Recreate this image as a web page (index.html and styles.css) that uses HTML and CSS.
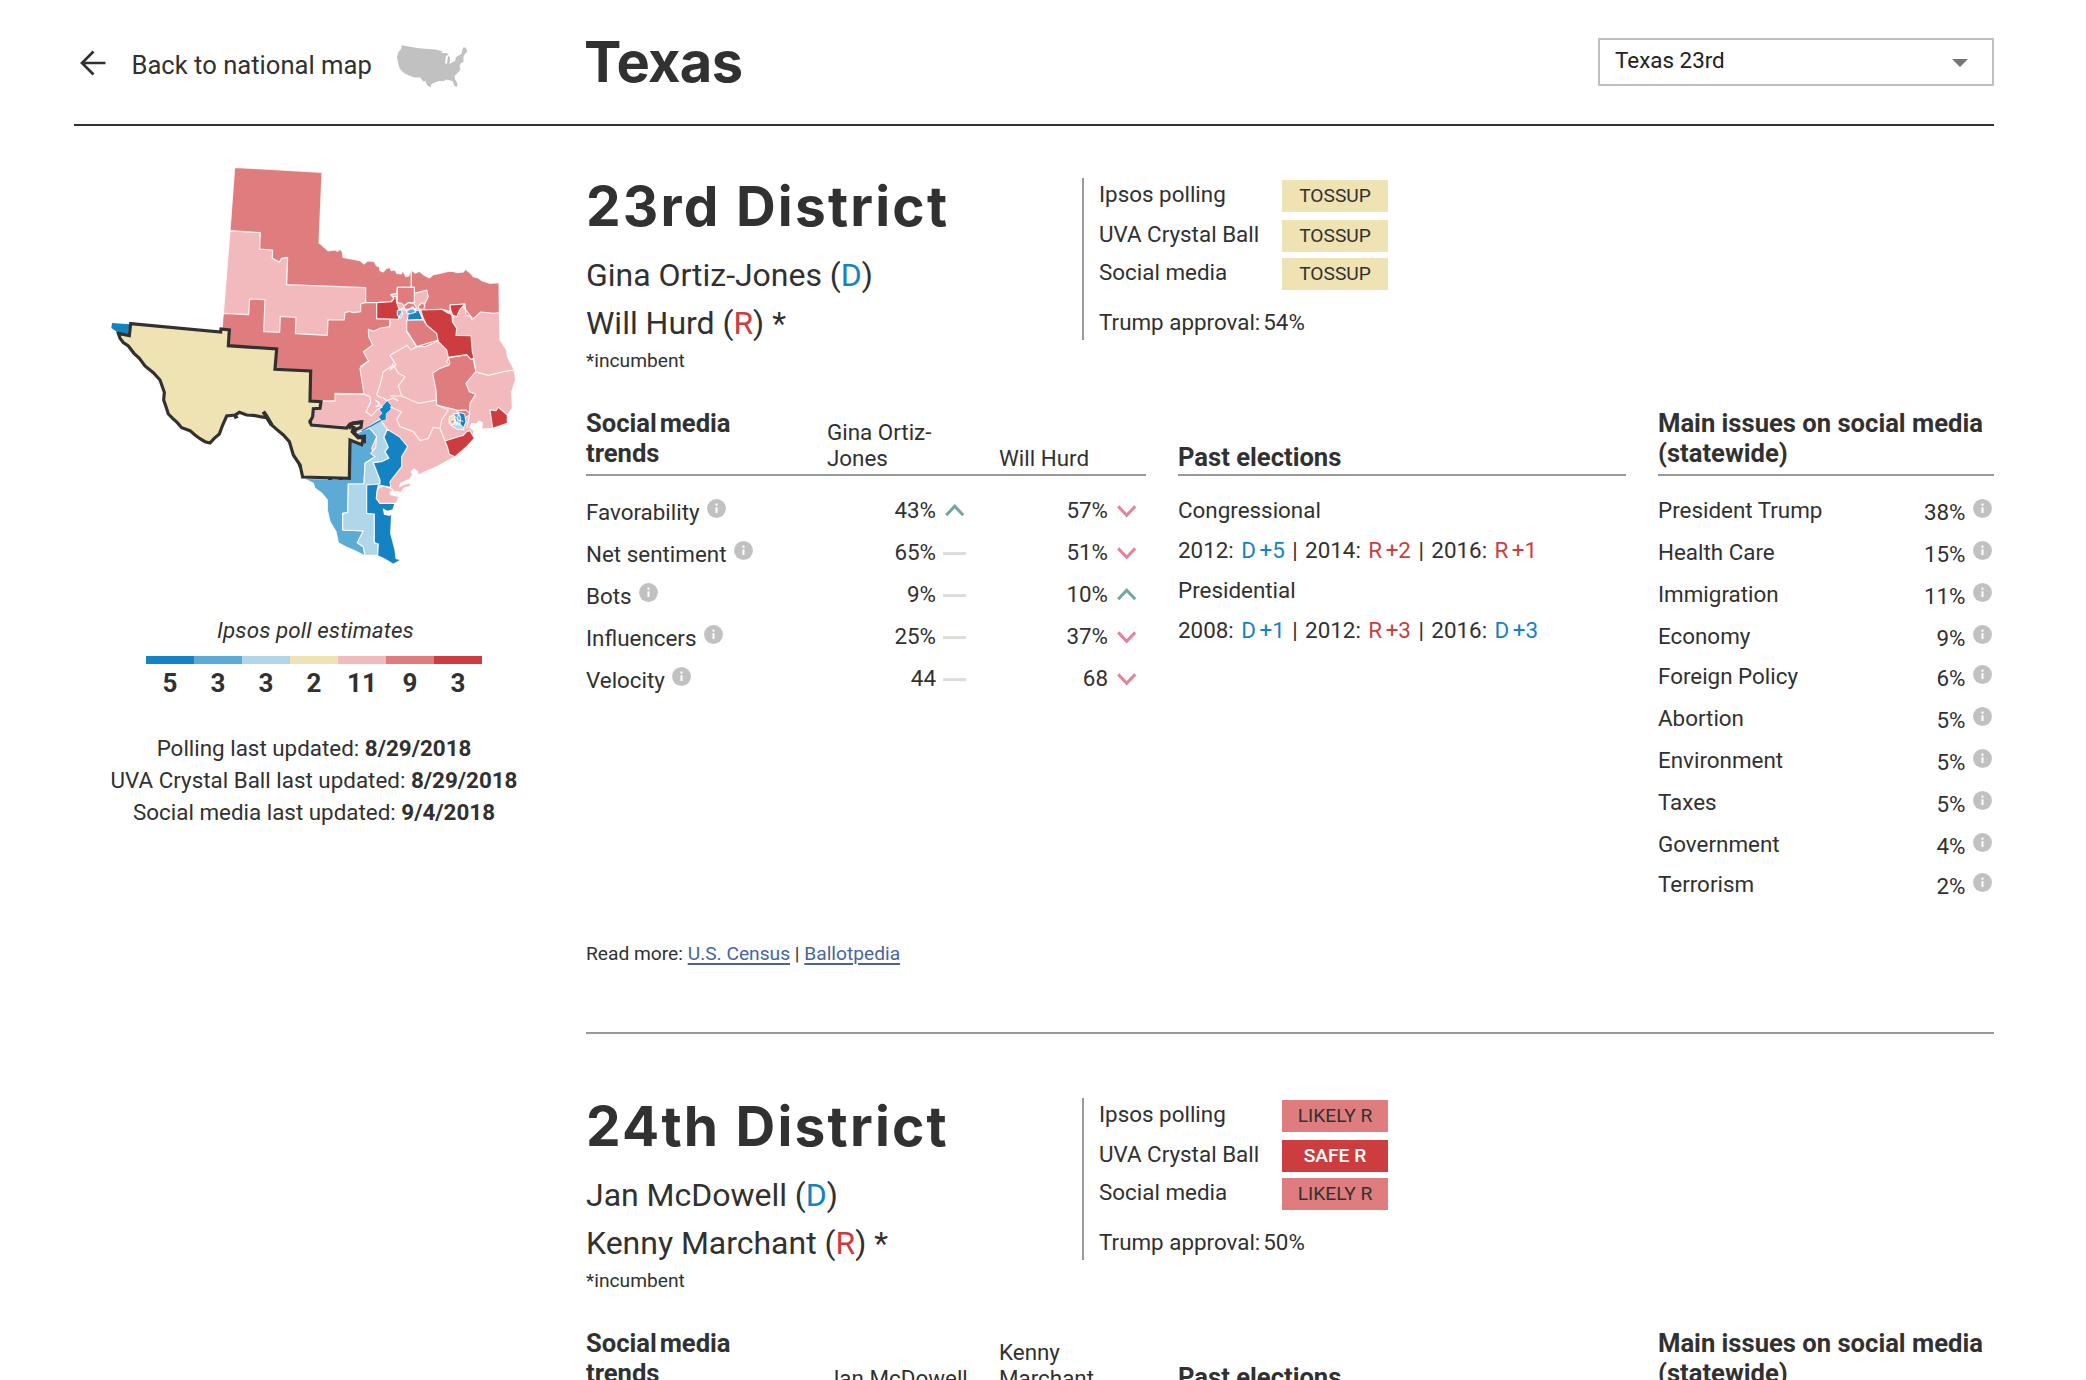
FILE: index.html
```html
<!DOCTYPE html>
<html lang="en">
<head>
<meta charset="utf-8">
<title>Texas</title>
<link rel="stylesheet" href="styles.css">
</head>
<body>
<svg class="defs" aria-hidden="true">
  <symbol id="info" viewBox="0 0 19 19"><circle cx="9.5" cy="9.5" r="9.4" fill="#c1c1c1"/><path d="M9.5 8.2v5.8M9.5 4.6v2.2" stroke="#fff" stroke-width="2"/></symbol>
  <symbol id="up" viewBox="0 0 24 24"><path d="M3.2 16.2 11.7 7.2 20.2 16.2" fill="none" stroke="#74a5a3" stroke-width="3"/></symbol>
  <symbol id="down" viewBox="0 0 24 24"><path d="M3.2 7.4 11.7 16.4 20.2 7.4" fill="none" stroke="#e4839a" stroke-width="3"/></symbol>
  <symbol id="flat" viewBox="0 0 24 24"><path d="M0 12.6H23" fill="none" stroke="#dcdcd8" stroke-width="3"/></symbol>
</svg>
<div class="page">
  <header class="top">
    <a class="back">
      <svg class="back-arrow" width="26" height="26" viewBox="0 0 26 26"><path d="M13.5 1.5 2 13 13.5 24.500M2 13H25.500" fill="none" stroke="#313131" stroke-width="2.700"/></svg>
      <span class="back-label">Back to national map</span>
      <svg class="usa" width="71" height="43" viewBox="0 0 71 43"><path fill="#c1c1c1" d="M5 .3 20 3 40 4.700 46 6.500 44 8 49 8 52 9.500 49 11 48 18 50 19 51 11 53 12 53 16 52 19 58 16 59 12 64.500 9 66 2.500 68.500 2.500 70.500 6 66.500 11 66.500 17 64 18 62.500 21 63.500 24 61.500 27 57.500 31 58 34 60.500 39 60 42 57.500 41 55.500 36 49 34.500 47 36 42 36 38 37.500 34.500 39 33.500 42.500 30 40 28.500 36 26 36.500 23.500 32.500 18 32.500 12 30.500 7 28 3 24 1.500 20 0 12 1.500 7 4 4z"/></svg>
    </a>
    <h1>Texas</h1>
    <div class="select"><span>Texas 23rd</span><svg width="16" height="8" viewBox="0 0 16 8"><path d="M0 0H16L8 8z" fill="#757575"/></svg></div>
  </header>

  <div class="main">
    <aside class="side">
      <svg class="map" width="430" height="430" viewBox="0 0 1290 1290">
        <g stroke="#fff" stroke-opacity=".85" stroke-width="3.500" stroke-linejoin="round">
          <!-- state silhouette, leaning Republican -->
          <path fill="#f2babc" d="M563 322 560 404 934 410 1197 440 1200 570 1220 600 1222 620 1242 658 1247 690 1235 725 1237 775 1222 795 1222 820 1178 835 1145 837 1147 818 1137 813 1130 822 1114 820 1110 832 1120 840 1123 865 1100 895 1065 920 1010 950 975 965 955 975 953 965 942 957 933 965 938 975 928 988 902 1000 898 1010 910 1004 930 998 932 1008 912 1014 900 1030 895 1025 870 1024 872 1034 898 1040 888 1062 840 1060 829 1042 760 990 740 830 633 822 640 776 661 775 663 753 705 730 370 490 390 242 481 248 479 297 518 300 517 325 538 336 545 325z"/>
          <!-- districts, likely Republican -->
          <path fill="#df7d7e" d="M404 52 666 67 657 280 662 282 685 303 706 300 712 304 720 298 727 305 729 322 780 332 792 342 802 333 822 334 830 348 838 350 840 362 850 366 858 356 869 352 874 362 886 360 890 370 904 372 908 362 918 380 926 378 934 358 934 412 892 412 890 430 872 434 882 446 872 456 830 458 797 458 797 413 560 404 563 322 545 325 538 336 517 325 518 300 479 297 481 248 390 242z"/>
          <path fill="#df7d7e" d="M934 360 946 370 958 364 970 374 988 384 1000 374 1020 370 1044 364 1060 364 1072 368 1090 366 1096 358 1110 368 1120 380 1135 384 1146 392 1170 400 1197 398 1198 488 1180 490 1160 488 1142 486 1116 510 1112 500 1098 495 1095 462 1050 465 1050 485 1028 478 965 480 975 460 985 440 980 420 943 430 943 412 934 412z"/>
          <path fill="#df7d7e" d="M892 412H943V458L925 458 912 468 905 460 892 458z"/>
          <path fill="#df7d7e" d="M912 468 925 458 943 462 950 475 930 480 912 480zM955 468l12-10 8 8-4 12h-14z"/>
          <path fill="#df7d7e" d="M370 490 446 494 449 447 495 449 491 545 539 547 541 499 588 502 586 551 682 556 684 509 733 510 735 488 748 484 760 488 782 485 782 462 797 458H830V506H870L869 530 842 534 820 544 805 538 806 560 818 585 790 605 805 632 780 655 785 690 792 732 705 730V753H663L630 753 632 663 525 658 530 597 385 587 388 540 366 537z"/>
          <path fill="#df7d7e" d="M920 510H970L980 525 1010 550 1015 572 975 590 950 590 930 560 920 545z"/>
          <path fill="#df7d7e" d="M1048 622 1100 615 1122 630 1127 660 1126 666 1098 700 1108 725 1127 733 1110 760 1108 800 1098 782 1070 780 1050 775 1010 765 1008 720 998 670 1020 655 1048 645 1040 635z"/>
          <path fill="#df7d7e" d="M1070 782l28-2 12 12-18 16-16-12z"/>
          <!-- safe Republican -->
          <path fill="#cd3d3f" d="M830 458 875 455 882 446 880 440H888L890 458 896 475 900 485 895 508 830 506z"/>
          <path fill="#cd3d3f" d="M962 480 1025 478 1045 490 1056 488 1057 515 1070 535 1068 556 1113 557 1117 605 1122 625 1113 628 1100 614 1045 622 1040 600 1015 575 1010 550 980 525 970 505z"/>
          <path fill="#cd3d3f" d="M1050 465 1095 462 1080 478 1070 500 1058 495 1052 480z"/>
          <path fill="#cd3d3f" d="M1170 780 1188 782 1195 772 1222 795 1222 820 1178 835z"/>
          <path fill="#cd3d3f" d="M1035 873 1075 860 1090 856 1100 845 1110 842 1123 865 1100 890 1065 920 1048 913 1042 890z"/>
          <!-- Democratic -->
          <path stroke="none" fill="#1483c4" d="M36 519 88 523 85 552 60 548 46 542 34 534z"/>
          <path fill="#1483c4" d="M925 490 940 484 956 480 968 508 922 510z"/>
          <path fill="#5babd6" d="M918 478 940 476 948 486 930 492 920 488zM892 482l12-4 4 14-6 12-10-8z"/>
          <path fill="#5babd6" d="M610 985 748 988 750 860 780 845 820 830 830 860 815 895 825 920 795 940 792 1002 745 1002 743 1088 728 1090V1140L790 1143 772 1178 790 1190 795 1217 760 1200 740 1192 715 1178 708 1145 690 1115 682 1080 682 1050 666 1030 645 1015 640 1000z"/>
          <path fill="#b0d6e9" d="M805 830 840 808 862 838 852 862 865 892 855 905 867 925 845 935 820 938 840 990V1002L800 1005V1090L823 1092V1178L835 1182 833 1215 795 1217 790 1190 772 1178 790 1143 728 1140V1090L743 1088 745 1002H792L795 940 825 920 812 910 827 892 830 860z"/>
          <path fill="#1483c4" d="M862 838 900 862 923 890 905 920V950L870 995 872 1012 835 1005 832 1018 829 1045 840 1060H885L875 1090 872 1150 885 1200 888 1225 902 1230 880 1243 850 1225 833 1217 835 1182 823 1178V1092L800 1090V1005L840 1002V990L820 938 845 935 867 925 855 905 865 892 852 862z"/>
          <path fill="#f2babc" d="M838 1012 850 1008 870 1014 880 1020 870 1026 872 1034 898 1040 888 1060H840L829 1045 832 1020z"/>
          <path stroke="none" fill="#fff" d="M848 1075 862 1082 880 1078 878 1092 868 1098 852 1094z"/>
          <path fill="none" stroke="#1483c4" stroke-opacity="1" stroke-width="4" d="M848 808 785 843"/>
          <path fill="#1483c4" stroke-width="2" d="M862 752 875 768 872 779 859 791 858 810 844 813 836 800 846 790 838 778 850 765z"/>
          <path fill="none" d="M658 753 705 753M705 732 792 732 810 740 812 756 798 785 815 798 830 780 848 770M780 650 808 632M870 508V530M922 545 950 590 932 600 922 586 870 616 888 645 870 660 880 640M950 590 1010 572 1015 572M1045 622 1050 642M880 645 895 670 915 680 895 708 905 738 870 738M880 645 850 665 840 705 830 735 845 745M905 738 955 760 1010 750M1010 765 1045 780 1025 810 1020 835 1000 832 985 865 960 872 940 845 900 830 890 808 905 785 870 770M1127 666 1165 676 1215 664 1247 660M1120 630 1127 660M1108 800 1100 835M1020 835 1035 873"/>
          <path fill="none" stroke-width="4" d="M826 750l14 12-12 8 20-4M848 742l12 10 20-8 14 8M900 480l12-8 8 12 18-14 10 12M906 488l-10 14M1050 490 1060 500 1058 515M1090 470 1105 490 1118 505"/>
          <path fill="#efe2b3" d="M1048 800l14-6 4 18-8 14-10-6z"/>
          <path fill="#b0d6e9" d="M1052 825l18-4 20 8 2 10-22-2z"/>
          <path fill="#5babd6" d="M1060 790l22 2 10 16-4 16-20-8z"/>
          <path fill="#1483c4" d="M1074 786l20 6 4 24-8 18-10-12 2-18z"/>
          <path fill="#cd3d3f" stroke-width="2" d="M1052 812h10v8h-10z"/>
          <path fill="none" stroke-width="3" d="M1062 796l14 14-8 18M1076 790l-4 20 18 4M1045 815l30 4"/>
        </g>
        <!-- the selected district -->
        <path fill="#efe2b3" stroke="#313131" stroke-width="9.500" stroke-linejoin="miter" d="M92 521 362 546 363 537 388 540 385 587 530 597 525 658 632 663 630 753 663 755 660 775 640 776 638 800 630 815 634 825 740 834 750 822 785 816 783 832 768 838 762 850 772 858 790 866 785 884 750 870 748 985 608 981 600 945 580 915 568 875 550 855 530 838 515 825 500 803 480 800 460 796 440 795 418 787 405 795 380 798 368 825 358 852 342 866 330 879 315 875 300 866 285 855 270 842 245 833 232 818 218 805 205 792 198 770 191 750 193 727 180 690 160 668 135 648 118 625 102 610 85 588 70 578 60 565 55 550 88 557z"/>
        <path fill="none" stroke="#313131" stroke-width="12" d="M745 835 758 820 785 817M762 828 758 845 775 862 792 860 792 880M405 795 410 805M490 785 500 800 515 825M595 948 604 945M690 982v8M722 982v8M626 815h10"/>
      </svg>
      <p class="map-caption">Ipsos poll estimates</p>
      <div class="scale">
        <div class="safe-d">5</div><div class="likely-d">3</div><div class="lean-d">3</div><div class="tossup">2</div><div class="lean-r">11</div><div class="likely-r">9</div><div class="safe-r">3</div>
      </div>
      <div class="updated">
        <p>Polling last updated: <b>8/29/2018</b></p>
        <p>UVA Crystal Ball last updated: <b>8/29/2018</b></p>
        <p>Social media last updated: <b>9/4/2018</b></p>
      </div>
    </aside>

    <div class="districts">
      <section class="district">
        <div class="intro">
          <div class="who">
            <h2>23rd District</h2>
            <p class="name">Gina Ortiz-Jones (<span class="dem">D</span>)</p>
            <p class="name">Will Hurd (<span class="rep">R</span>) *</p>
            <p class="note">*incumbent</p>
          </div>
          <div class="ratings">
            <div class="rating"><span>Ipsos polling</span><b class="badge b-tossup">TOSSUP</b></div>
            <div class="rating"><span>UVA Crystal Ball</span><b class="badge b-tossup">TOSSUP</b></div>
            <div class="rating last"><span>Social media</span><b class="badge b-tossup">TOSSUP</b></div>
            <p class="approval">Trump approval:<span>54%</span></p>
          </div>
        </div>
        <div class="columns">
          <div class="trends">
            <div class="head trend-row"><h3 class="tight">Social media<br>trends</h3><span class="cand">Gina Ortiz-<br>Jones</span><span class="cand">Will Hurd</span></div>
            <div class="rows">
              <div class="trend-row"><span class="label">Favorability<svg class="i"><use href="#info"/></svg></span><span class="val">43%<svg class="t"><use href="#up"/></svg></span><span class="val">57%<svg class="t"><use href="#down"/></svg></span></div>
              <div class="trend-row"><span class="label">Net sentiment<svg class="i"><use href="#info"/></svg></span><span class="val">65%<svg class="t"><use href="#flat"/></svg></span><span class="val">51%<svg class="t"><use href="#down"/></svg></span></div>
              <div class="trend-row"><span class="label">Bots<svg class="i"><use href="#info"/></svg></span><span class="val">9%<svg class="t"><use href="#flat"/></svg></span><span class="val">10%<svg class="t"><use href="#up"/></svg></span></div>
              <div class="trend-row"><span class="label">Influencers<svg class="i"><use href="#info"/></svg></span><span class="val">25%<svg class="t"><use href="#flat"/></svg></span><span class="val">37%<svg class="t"><use href="#down"/></svg></span></div>
              <div class="trend-row"><span class="label">Velocity<svg class="i"><use href="#info"/></svg></span><span class="val">44<svg class="t"><use href="#flat"/></svg></span><span class="val">68<svg class="t"><use href="#down"/></svg></span></div>
            </div>
          </div>
          <div class="past">
            <div class="head low"><h3>Past elections</h3></div>
            <div class="results">
              <p>Congressional</p>
              <p class="years">2012: <span class="dem"><i>D</i>+5</span> | 2014: <span class="rep"><i>R</i>+2</span> | 2016: <span class="rep"><i>R</i>+1</span></p>
              <p>Presidential</p>
              <p class="years">2008: <span class="dem"><i>D</i>+1</span> | 2012: <span class="rep"><i>R</i>+3</span> | 2016: <span class="dem"><i>D</i>+3</span></p>
            </div>
          </div>
          <div class="issues">
            <div class="head"><h3>Main issues on social media<br>(statewide)</h3></div>
            <div class="rows">
              <div class="issue"><span>President Trump</span><span class="pct">38%</span><svg class="i"><use href="#info"/></svg></div>
              <div class="issue"><span>Health Care</span><span class="pct">15%</span><svg class="i"><use href="#info"/></svg></div>
              <div class="issue"><span>Immigration</span><span class="pct">11%</span><svg class="i"><use href="#info"/></svg></div>
              <div class="issue"><span>Economy</span><span class="pct">9%</span><svg class="i"><use href="#info"/></svg></div>
              <div class="issue"><span>Foreign Policy</span><span class="pct">6%</span><svg class="i"><use href="#info"/></svg></div>
              <div class="issue"><span>Abortion</span><span class="pct">5%</span><svg class="i"><use href="#info"/></svg></div>
              <div class="issue"><span>Environment</span><span class="pct">5%</span><svg class="i"><use href="#info"/></svg></div>
              <div class="issue"><span>Taxes</span><span class="pct">5%</span><svg class="i"><use href="#info"/></svg></div>
              <div class="issue"><span>Government</span><span class="pct">4%</span><svg class="i"><use href="#info"/></svg></div>
              <div class="issue"><span>Terrorism</span><span class="pct">2%</span><svg class="i"><use href="#info"/></svg></div>
            </div>
          </div>
        </div>
        <p class="more">Read more: <a>U.S. Census</a> | <a>Ballotpedia</a></p>
      </section>

      <section class="district">
        <div class="intro">
          <div class="who">
            <h2>24th District</h2>
            <p class="name">Jan McDowell (<span class="dem">D</span>)</p>
            <p class="name">Kenny Marchant (<span class="rep">R</span>) *</p>
            <p class="note">*incumbent</p>
          </div>
          <div class="ratings">
            <div class="rating"><span>Ipsos polling</span><b class="badge b-likely">LIKELY R</b></div>
            <div class="rating"><span>UVA Crystal Ball</span><b class="badge b-safe">SAFE R</b></div>
            <div class="rating last"><span>Social media</span><b class="badge b-likely">LIKELY R</b></div>
            <p class="approval">Trump approval:<span>50%</span></p>
          </div>
        </div>
        <div class="columns">
          <div class="trends">
            <div class="head trend-row"><h3 class="tight">Social media<br>trends</h3><span class="cand">Jan McDowell</span><span class="cand">Kenny<br>Marchant</span></div>
          </div>
          <div class="past"><div class="head low"><h3>Past elections</h3></div></div>
          <div class="issues"><div class="head"><h3>Main issues on social media<br>(statewide)</h3></div></div>
        </div>
      </section>
    </div>
  </div>
</div>
</body>
</html>
```
FILE: styles.css
```css
* { box-sizing: border-box; margin: 0; padding: 0; }
html, body { height: 100%; overflow: hidden; }
body { background: #fff; color: #313131; font: 22.4px/32px Roboto, sans-serif; }
svg { display: block; flex: none; }
.defs { display: none; }
.page { width: 1920px; margin-left: 74px; }

.top { display: grid; grid-template-columns: 512px 1fr 396px; align-items: start; height: 126px; border-bottom: 2px solid #313131; }
.back { display: flex; padding: 48px 0 0 6px; font-size: 25.6px; }
.back-arrow { margin-top: 2px; }
.back-label { margin: 1px 0 0 25.500px; width: 265.500px; }
.usa { margin-top: -3px; }
h1 { margin: 30px 0 0 -2px; font: 700 56px/64px Inter, sans-serif; letter-spacing: -.6px; }
.select { display: flex; justify-content: space-between; margin-top: 38px; height: 48px; border: 2px solid #bfbfbf; padding: 4px 24px 0 15px; color: #212121; }
.select svg { margin-top: 14.500px; }

.main { display: grid; grid-template-columns: 480px 1408px; column-gap: 32px; }
.side { display: flex; flex-direction: column; align-items: center; padding-top: 24px; text-align: center; }
.map { margin-left: 2px; }
.map-caption { margin: 36px 0 12px 3px; line-height: 28px; font-style: italic; letter-spacing: .1px; }
.scale { display: grid; grid-template-columns: repeat(7, 48px); font-size: 26px; font-weight: 700; line-height: 30px; }
.scale div { border-top: 8px solid; padding-top: 4px; }
.scale .safe-d { border-color: #1483c4; }
.scale .likely-d { border-color: #5babd6; }
.scale .lean-d { border-color: #b0d6e9; }
.scale .tossup { border-color: #efe2b3; }
.scale .lean-r { border-color: #f2babc; }
.scale .likely-r { border-color: #df7d7e; }
.scale .safe-r { border-color: #cd3d3f; }
.updated { margin-top: 34px; }

.district { padding-top: 52px; }
.district + .district { margin-top: 66px; padding-top: 64px; border-top: 2px solid #999; }
.intro { display: grid; grid-template-columns: 496px 1fr; align-items: start; height: 230px; }
h2 { margin: -1px 0 16px; font: 700 55px/58px Inter, sans-serif; letter-spacing: 2.2px; }
.name { font-size: 32px; line-height: 48px; letter-spacing: -.02px; }
.note { margin-top: 2px; font-size: 19.2px; line-height: 24px; }
.dem { color: #1483c4; }
.rep { color: #cd3d3f; }
.ratings { height: 162px; border-left: 2px solid #999; padding: 2px 0 0 15px; }
.rating { display: grid; grid-template-columns: 183px 106px; height: 40px; line-height: 29px; }
.rating.last { margin-top: -2px; }
.badge { height: 32px; text-align: center; font-size: 19.2px; line-height: 31px; font-weight: 400; }
.b-tossup { background: #efe2b3; }
.b-likely { background: #df7d7e; }
.b-safe { background: #cd3d3f; color: #fff; font-weight: 500; }
.approval { margin-top: 8px; }
.approval span { margin-left: 3px; }

.columns { display: grid; grid-template-columns: 560px 448px 336px; column-gap: 32px; }
.head { height: 68px; border-bottom: 2px solid #999; }
h3 { font-size: 25.6px; line-height: 30px; white-space: nowrap; }
.tight { word-spacing: -3.500px; }
.low { display: flex; align-items: flex-end; padding-bottom: 2px; }
.trend-row { display: grid; grid-template-columns: 242px 172px 146px; }
.cand { align-self: end; margin-left: -1px; padding-bottom: 3px; line-height: 26px; }
.rows { margin-top: 13px; line-height: 43px; }
.rows .trend-row { height: 42px; }
.label { display: flex; padding-top: 2px; }
.i { width: 19px; height: 19px; margin-top: 10px; }
.label .i { margin: 8px 0 0 7px; }
.val { display: flex; justify-content: flex-end; width: 139px; }
.t { width: 24px; height: 24px; margin: 10px 0 0 7px; }
.results { margin-top: 14px; line-height: 40px; }
.years { word-spacing: 1.900px; }
.years i { font-style: normal; margin-right: 3.500px; }
.issue { display: grid; grid-template-columns: 1fr auto 19px; column-gap: 7.500px; height: 42px; padding-right: 2px; }
.issue:nth-child(5n+4) { height: 40px; }
.pct { padding-top: 1.500px; }
.more { margin-top: 37px; font-size: 19.2px; line-height: 24px; }
.more a { color: #46659f; text-decoration: underline; text-decoration-thickness: 2px; text-underline-offset: 3px; }
```
